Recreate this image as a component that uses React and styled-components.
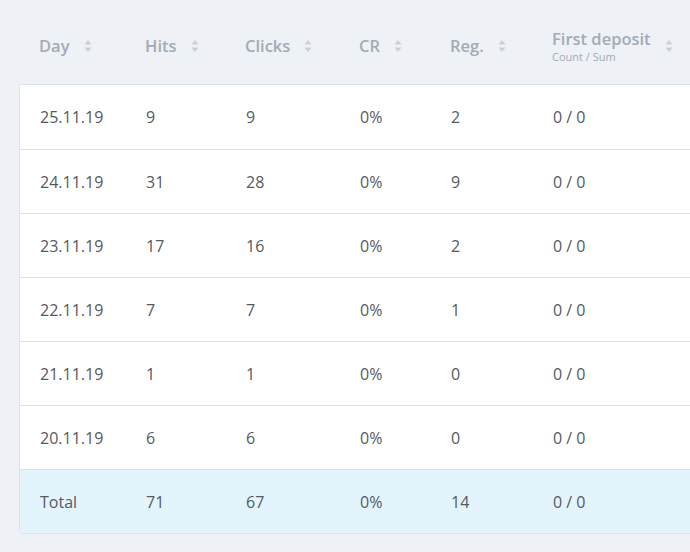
import styled, { createGlobalStyle } from 'styled-components'

const GlobalStyle = createGlobalStyle`
  body {
    margin: 0;
    background: #eef1f5;
    font-family: "Open Sans", "Noto Sans", sans-serif;
  }
`

const COLS = '106px 100px 114px 91px 102px 1fr'

const Page = styled.div`
  width: 690px;
  height: 552px;
  overflow: hidden;
  padding-left: 19px;
  box-sizing: border-box;
`

const HeaderRow = styled.div`
  display: grid;
  grid-template-columns: ${COLS};
  width: 720px;
  height: 84px;
  align-items: center;
  padding-left: 1px;
  box-sizing: border-box;
`

const HeadCell = styled.div`
  display: flex;
  align-items: center;
  gap: 14px;
  padding-left: 19px;
  color: #a3abb7;
  font-size: 16.5px;
  font-weight: 600;
  margin-top: 7px;
`

const HeadLabel = styled.div`
  display: flex;
  flex-direction: column;
  line-height: 22px;
  small {
    font-size: 11px;
    font-weight: 400;
    line-height: 13px;
  }
`

const Card = styled.div`
  width: 720px;
  background: #fff;
  border: 1px solid #dde2e8;
  border-radius: 4px;
  overflow: hidden;
`

const Row = styled.div`
  display: grid;
  grid-template-columns: ${COLS};
  height: 64px;
  align-items: center;
  background: ${p => (p.$total ? '#e3f4fd' : '#fff')};
  border-top: ${p => (p.$first ? 'none' : '1px solid #dde2e8')};
  box-sizing: border-box;
`

const Cell = styled.div`
  padding-left: 20px;
  color: #555a5f;
  font-size: 16px;
`

function SortIcon() {
  return (
    <svg width="8" height="14" viewBox="0 0 8 14">
      <path d="M4 1 L7.5 5.5 H0.5 Z" fill="#cbd0d7" />
      <path d="M4 13 L7.5 8.5 H0.5 Z" fill="#cbd0d7" />
    </svg>
  )
}

const rows = [
  ['25.11.19', 9, 9, '0%', 2, '0 / 0'],
  ['24.11.19', 31, 28, '0%', 9, '0 / 0'],
  ['23.11.19', 17, 16, '0%', 2, '0 / 0'],
  ['22.11.19', 7, 7, '0%', 1, '0 / 0'],
  ['21.11.19', 1, 1, '0%', 0, '0 / 0'],
  ['20.11.19', 6, 6, '0%', 0, '0 / 0'],
]

export default function App() {
  return (
    <Page>
      <GlobalStyle />
      <HeaderRow>
        {['Day', 'Hits', 'Clicks', 'CR', 'Reg.'].map(h => (
          <HeadCell key={h}>
            <HeadLabel>{h}</HeadLabel>
            <SortIcon />
          </HeadCell>
        ))}
        <HeadCell>
          <HeadLabel>
            First deposit
            <small>Count / Sum</small>
          </HeadLabel>
          <SortIcon />
        </HeadCell>
      </HeaderRow>
      <Card>
        {rows.map((r, i) => (
          <Row key={r[0]} $first={i === 0}>
            {r.map((v, j) => (
              <Cell key={j}>{v}</Cell>
            ))}
          </Row>
        ))}
        <Row $total>
          {['Total', 71, 67, '0%', 14, '0 / 0'].map((v, j) => (
            <Cell key={j}>{v}</Cell>
          ))}
        </Row>
      </Card>
    </Page>
  )
}
